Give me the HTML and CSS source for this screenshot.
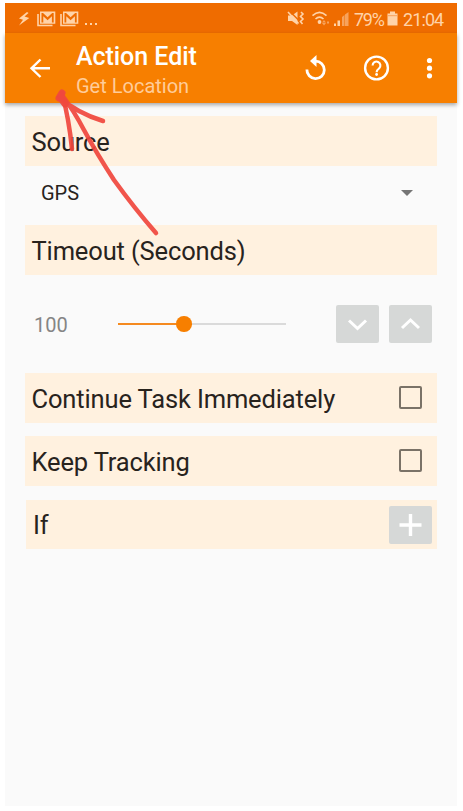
FILE: index.html
```html
<!DOCTYPE html>
<html lang="en">
<head>
<meta charset="utf-8">
<title>Action Edit</title>
<link rel="stylesheet" href="styles.css">
</head>
<body>
<div class="phone">
  <div class="status">
    <svg class="notices" width="90" height="30" viewBox="5 3 90 30">
      <path class="pale" d="M27 12 19 18.500l4 1.300-4 5.700 10.300-7.500-4.800-1.500 4-3.500z"/>
      <g id="mail"><path class="line" d="M38 14v11.500h14.500"/><path class="pale" fill-rule="evenodd" d="M40 11.500h15.300v12.300H40zM41.500 13v9.500h1.800v-6.300l4.300 4 4.300-4v6.300h1.800V13h-1.500l-4.600 4.300-4.600-4.300z"/></g>
      <use href="#mail" x="23"/>
      <path class="pale" d="M85 23h2v2h-2zm5 0h2v2h-2zm5 0h2v2h-2z"/>
    </svg>
    <svg class="signals" width="64" height="30" viewBox="286 3 64 30">
      <path class="pale" d="M288 15.500h4l5.500-4v13.500L292 21h-4z"/>
      <path class="cut" d="m289.500 11 9.500 9.500"/>
      <path class="line" d="m288 12 10.500 11.500M301 12l2 2-2.500 2.500 2.500 2.500-2.500 2.500 2 2.500"/>
      <path class="line" d="M312.500 15.700q7-6.500 14 0M315.500 19q4-3.700 8 0"/>
      <circle class="pale" cx="319.500" cy="22" r="1.900"/>
      <path class="dim" d="m324 20 2 2.500h-4zm0 5.500-2-2.500h4zm3-4h2v2h-2z"/>
      <path class="pale" d="M334 23.500h2V26h-2zm3.500-3h2.500V26h-2.500z"/>
      <path class="dim" d="M342 17l2.500-2v11H342zM345 14.500l3.500-2.500v14H345z"/>
    </svg>
    <span class="percent">79%</span>
    <svg class="battery" width="12" height="30" viewBox="387 3 12 30"><path class="pale" d="M390 11.500h5v2h2.500v12h-10v-12h2.500z"/><path class="seam" d="M387.500 15.700h10"/></svg>
    <span class="clock">21:04</span>
  </div>
  <header class="bar">
    <svg class="back" width="24" height="24" viewBox="28 56 24 24"><path class="white" d="M50 68.300H32M40.500 59.500 31.500 68.300l9 8.700"/></svg>
    <div class="titles"><h1>Action Edit</h1><p>Get Location</p></div>
    <svg class="actions" width="140" height="32" viewBox="300 52 140 32">
      <path class="white undo" d="M315.500 61.200a8.700 8.700 0 1 1-8.600 8.300"/><path class="solid" d="M316.500 55v12l-6.500-6z"/>
      <circle class="white" cx="376.500" cy="68" r="11.400"/>
      <path class="white mark" d="M372.600 65.500a3.900 3.900 0 1 1 6.500 2.900c-1.600 1.200-2.500 1.800-2.500 3.800"/><circle class="solid" cx="376.600" cy="74.500" r="1.400"/>
      <circle class="solid" cx="429.500" cy="60.500" r="2.600"/><circle class="solid" cx="429.500" cy="68.200" r="2.600"/><circle class="solid" cx="429.500" cy="75.800" r="2.600"/>
    </svg>
  </header>
  <main>
    <section class="row"><h2>Source</h2></section>
    <div class="select"><span>GPS</span><i class="caret"></i></div>
    <section class="row"><h2>Timeout (Seconds)</h2></section>
    <div class="adjust">
      <span class="value">100</span>
      <div class="track"><div class="fill"></div><div class="knob"></div><div class="rest"></div></div>
      <div class="button"><svg width="43" height="38" viewBox="0 0 43 38"><path class="white chevron" d="m13 15.500 8.500 8 8.500-8"/></svg></div>
      <div class="button"><svg width="43" height="38" viewBox="0 0 43 38"><path class="white chevron" d="m13 23 8.500-8 8.500 8"/></svg></div>
    </div>
    <section class="row"><h2>Continue Task Immediately</h2><span class="check"></span></section>
    <section class="row keep"><h2>Keep Tracking</h2><span class="check"></span></section>
    <section class="row condition"><h2>If</h2><div class="button"><svg width="43" height="38" viewBox="0 0 43 38"><path class="white plus" d="M10.500 19h22M21.500 8v22"/></svg></div></section>
  </main>
</div>
<svg class="arrow" width="463" height="811" viewBox="0 0 463 811"><path d="M156 233Q135 209 114 180Q97 154 84 130Q74 111 62 95M59 97Q77 113 103 121M62 93Q69 119 72 149"/><path class="tip" d="M59 98 62 93M65 104 60 97"/></svg>
</body>
</html>
```
FILE: styles.css
```css
* { box-sizing: border-box; }
body { margin: 0; background: #fff; font-family: Roboto, sans-serif; color: #28231d; }
.phone { width: 452px; height: 803px; margin: 3px 0 0 5px; background: #fafafa; }
svg { display: block; flex: none; }
h1, h2, p { margin: 0; font-weight: 400; white-space: nowrap; }
.status { height: 30px; display: flex; align-items: center; background: #ef6c00; color: #ffd3a8; font-size: 18px; }
.notices { overflow: visible; }
.signals { margin-left: 191px; }
.percent { width: 30px; margin-left: 4px; margin-top: 2px; letter-spacing: -1.3px; }
.battery { margin-left: 3px; }
.clock { margin: 2px 0 0 4px; letter-spacing: -.9px; }
.pale { fill: #ffd3a8; }
.dim { fill: #f7a25c; }
.line { fill: none; stroke: #ffd3a8; stroke-width: 1.6; }
.cut { stroke: #ef6c00; stroke-width: 1.5; }
.seam { stroke: #f7a25c; stroke-width: 1; }
.bar { position: relative; height: 70px; display: flex; align-items: center; background: #f77f00; box-shadow: 0 2px 4px #0005; }
.back { margin-left: 23px; }
.titles { width: 150px; margin-left: 24px; padding-top: 5px; }
h1 { color: #fff; font-size: 25px; line-height: 31px; font-weight: 500; letter-spacing: -.05px; }
.titles p { color: #ffcc99; font-size: 20px; line-height: 29px; }
.actions { margin-left: 74px; }
.white { fill: none; stroke: #fff; stroke-width: 2.4; }
.undo { stroke-width: 2.8; }
.mark { stroke-width: 2.1; }
.solid { fill: #fff; }
main { padding: 13px 20px 0; }
.row { height: 50px; display: flex; align-items: center; justify-content: space-between; padding: 1px 15px 0 6.500px; background: #fff1df; }
h2 { font-size: 25.500px; line-height: 30px; letter-spacing: -.14px; padding-top: 1px; }
.select { height: 58.500px; display: flex; align-items: center; justify-content: space-between; padding: 0 24px 5px 16px; font-size: 20px; }
.caret { border: 6px solid transparent; border-top-color: #757575; border-bottom: 0; }
.adjust { height: 98.500px; display: flex; align-items: center; padding-left: 9px; }
.value { width: 84px; color: #858585; font-size: 20px; padding-top: 2px; }
.track { width: 168px; margin-right: 50px; display: flex; align-items: center; }
.fill { width: 58px; height: 2.500px; background: #f58a1f; }
.knob { width: 15.500px; height: 15.500px; border-radius: 50%; background: #f77f00; }
.rest { flex: 1; height: 2px; background: #dadada; }
.button { flex: none; width: 43px; height: 38px; border-radius: 2px; background: #d6d8d7; }
.button + .button { margin-left: 10px; }
.chevron { stroke-width: 3; }
.plus { stroke-width: 3.4; }
.check { width: 23px; height: 23px; margin-bottom: 2px; border: 2.300px solid #7a7267; border-radius: 2px; }
.keep { margin-top: 12.500px; }
.condition { margin: 14.500px 0 0 1px; height: 49px; padding: 0 5px 0 7px; }
.arrow { position: absolute; left: 0; top: 0; }
.arrow path { fill: none; stroke: #f0483e; stroke-width: 4.500; stroke-linecap: round; stroke-linejoin: round; opacity: .93; }
.arrow .tip { stroke-width: 7; }
```
